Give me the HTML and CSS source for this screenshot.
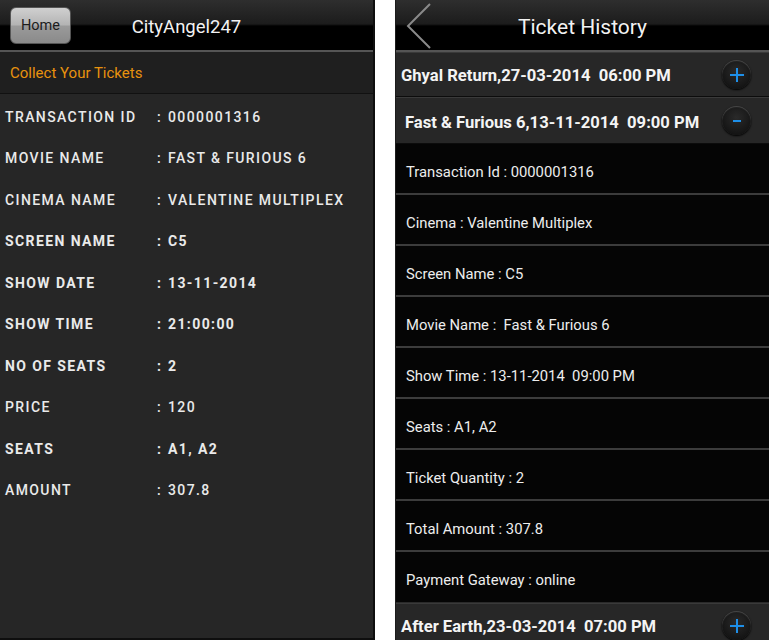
FILE: index.html
```html
<!DOCTYPE html>
<html lang="en">
<head>
<meta charset="utf-8">
<title>CityAngel247 – Tickets</title>
<link rel="stylesheet" href="styles.css">
</head>
<body>
<div class="screens">
  <!-- Collect tickets screen -->
  <section class="phone collect">
    <header class="bar">
      <button class="home-btn">Home</button>
      <h1 class="bar-title">CityAngel247</h1>
    </header>
    <div class="subhead">Collect Your Tickets</div>
    <dl class="details">
      <div class="drow"><dt>TRANSACTION ID</dt><dd><span class="sep">:</span>0000001316</dd></div>
      <div class="drow"><dt>MOVIE NAME</dt><dd><span class="sep">:</span>FAST &amp; FURIOUS 6</dd></div>
      <div class="drow"><dt>CINEMA NAME</dt><dd><span class="sep">:</span>VALENTINE MULTIPLEX</dd></div>
      <div class="drow strong"><dt>SCREEN NAME</dt><dd><span class="sep">:</span>C5</dd></div>
      <div class="drow strong"><dt>SHOW DATE</dt><dd><span class="sep">:</span>13-11-2014</dd></div>
      <div class="drow strong"><dt>SHOW TIME</dt><dd><span class="sep">:</span>21:00:00</dd></div>
      <div class="drow strong"><dt>NO OF SEATS</dt><dd><span class="sep">:</span>2</dd></div>
      <div class="drow"><dt>PRICE</dt><dd><span class="sep">:</span>120</dd></div>
      <div class="drow strong"><dt>SEATS</dt><dd><span class="sep">:</span>A1, A2</dd></div>
      <div class="drow"><dt>AMOUNT</dt><dd><span class="sep">:</span>307.8</dd></div>
    </dl>
  </section>

  <!-- Ticket history screen -->
  <section class="phone history">
    <header class="bar">
      <svg class="back" width="30" height="48" viewBox="0 0 30 48" aria-hidden="true">
        <polyline points="25,3 3,25 25,47" fill="none" stroke="#8a8a8a" stroke-width="2"/>
      </svg>
      <h1 class="bar-title big">Ticket History</h1>
    </header>

    <div class="group">
      <span class="group-title">Ghyal Return,27-03-2014&nbsp; 06:00 PM</span>
      <span class="toggle"><svg width="16" height="16" viewBox="0 0 16 16"><path d="M8 1v14M1 8h14" stroke="#1e8fe8" stroke-width="2"/></svg></span>
    </div>

    <div class="group open">
      <span class="group-title">Fast &amp; Furious 6,13-11-2014&nbsp; 09:00 PM</span>
      <span class="toggle"><svg width="16" height="16" viewBox="0 0 16 16"><path d="M4 8h8" stroke="#1e8fe8" stroke-width="2"/></svg></span>
    </div>
    <ul class="children">
      <li>Transaction Id : 0000001316</li>
      <li>Cinema : Valentine Multiplex</li>
      <li>Screen Name : C5</li>
      <li>Movie Name : &nbsp;Fast &amp; Furious 6</li>
      <li>Show Time : 13-11-2014&nbsp; 09:00 PM</li>
      <li>Seats : A1, A2</li>
      <li>Ticket Quantity : 2</li>
      <li>Total Amount : 307.8</li>
      <li>Payment Gateway : online</li>
    </ul>

    <div class="group">
      <span class="group-title">After Earth,23-03-2014&nbsp; 07:00 PM</span>
      <span class="toggle"><svg width="16" height="16" viewBox="0 0 16 16"><path d="M8 1v14M1 8h14" stroke="#1e8fe8" stroke-width="2"/></svg></span>
    </div>
  </section>
</div>
</body>
</html>
```

FILE: styles.css
```css
* { box-sizing: border-box; }

html, body {
  margin: 0;
  padding: 0;
  background: #ffffff;
}

body {
  font-family: Roboto, "Noto Sans", "Liberation Sans", sans-serif;
  color: #ececec;
}

.screens {
  display: flex;
  gap: 20px;
  height: 640px;
  overflow: hidden;
}

.phone {
  height: 640px;
  overflow: hidden;
  display: flex;
  flex-direction: column;
}

.collect {
  width: 375px;
  background: #262626;
  border-right: 2px solid #0e0e0e;
  border-bottom: 2px solid #0e0e0e;
}

.history {
  flex: 1;
  background: #050505;
  border-left: 1px solid #1c1c1c;
}

/* top action bar */
.bar {
  position: relative;
  height: 52px;
  flex: none;
  display: flex;
  align-items: center;
  justify-content: center;
  padding-top: 4px;
  background: linear-gradient(#2e2e2e 0%, #1c1c1c 48%, #000 52%, #000 100%);
  border-bottom: 2px solid #555;
}

.bar-title {
  margin: 0;
  font-size: 18.5px;
  font-weight: 400;
  color: #f2f2f2;
}

.bar-title.big {
  font-size: 21px;
}

.home-btn {
  position: absolute;
  left: 10px;
  top: 7px;
  width: 61px;
  height: 37px;
  border: 1px solid #555;
  border-radius: 6px;
  background: linear-gradient(#d0d0d0 0%, #b4b4b4 48%, #9a9a9a 52%, #8a8a8a 100%);
  font-family: inherit;
  font-size: 14.5px;
  color: #1c1c1c;
  padding: 0;
}

.back {
  position: absolute;
  left: 9px;
  top: 1px;
}

/* collect screen */
.subhead {
  height: 42px;
  flex: none;
  display: flex;
  align-items: center;
  padding-left: 10px;
  background: #1f1f1f;
  border-bottom: 1px solid #111;
  color: #e8920e;
  font-size: 15px;
}

.details {
  margin: 0;
  padding: 0;
}

.drow {
  height: 41.5px;
  display: flex;
  align-items: center;
  padding: 4px 0 0 5px;
  font-size: 14px;
  letter-spacing: 1.4px;
  font-weight: 500;
  color: #eaeaea;
}

.drow.strong {
  font-weight: 700;
}

.drow dt {
  width: 152px;
  flex: none;
}

.drow dd {
  margin: 0;
  display: flex;
}

.drow .sep {
  width: 11px;
  flex: none;
}

/* history screen */
.group {
  height: 45px;
  flex: none;
  display: flex;
  align-items: center;
  justify-content: space-between;
  padding: 2px 18px 0 5px;
  background: #272727;
  border-top: 1px solid #3a3a3a;
  border-bottom: 1px solid #0c0c0c;
}

.group .toggle {
  margin-top: -2px;
}

.group.open {
  height: 47px;
  padding-top: 4px;
  padding-left: 9px;
}

.group.open .toggle {
  margin-top: -4px;
}

.group-title {
  font-size: 16.6px;
  font-weight: 700;
  color: #f4f4f4;
  white-space: nowrap;
}

.toggle {
  width: 29px;
  height: 29px;
  flex: none;
  border-radius: 50%;
  display: flex;
  align-items: center;
  justify-content: center;
  background: radial-gradient(circle at 50% 40%, #2a2a2a 0%, #181818 60%, #0c0c0c 100%);
  box-shadow: inset 0 1px 1px #4a4a4a, 0 1px 2px #000;
}

.children {
  list-style: none;
  margin: 0;
  padding: 0;
  flex: none;
}

.children li {
  height: 51px;
  display: flex;
  align-items: center;
  padding: 6px 0 0 10px;
  font-size: 14.8px;
  color: #ededed;
  background: #050505;
  border-bottom: 2px solid #3c3c3c;
}

.children li:last-child {
  border-bottom: 1px solid #2a2a2a;
}
```
